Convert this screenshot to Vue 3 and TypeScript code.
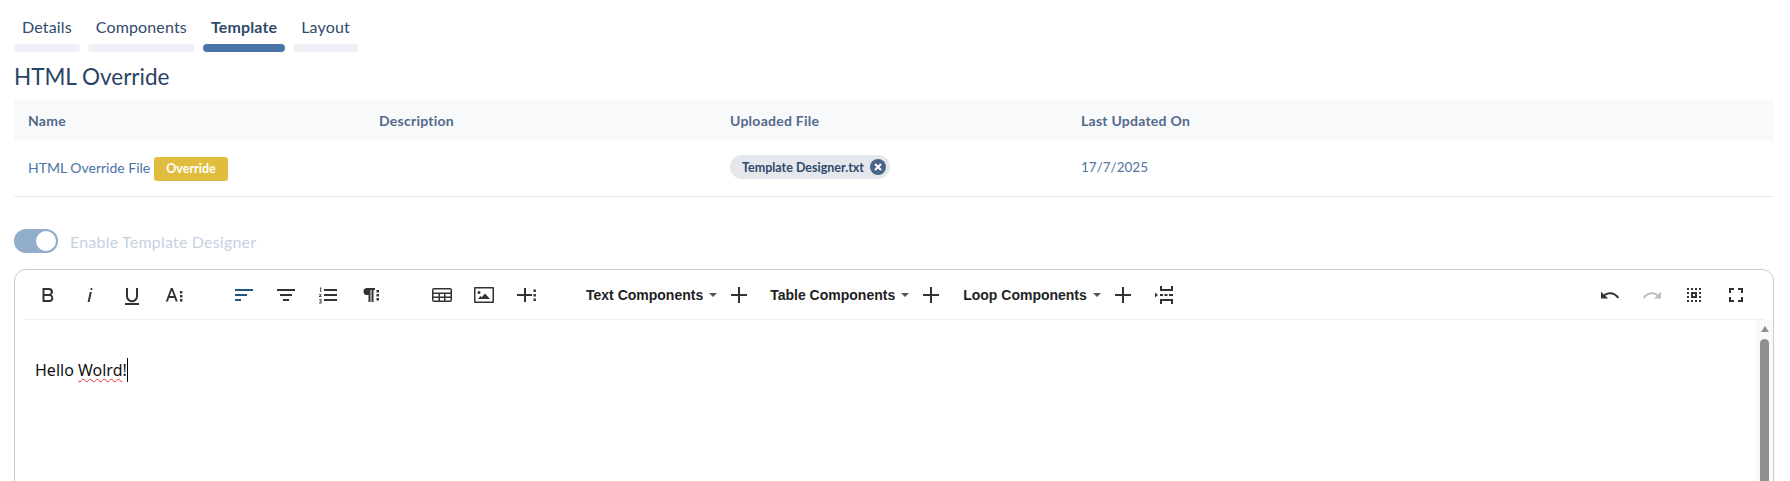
<script setup lang="ts">
interface Tool { id: string; d: string; muted?: boolean; active?: boolean }

const bold = 'M15.3 11.8c1-.7 1.7-1.8 1.7-2.9C17 6.700 15.300 5 13.100 5H6.500v14h7.100c2.100 0 3.700-1.700 3.700-3.800 0-1.500-.8-2.800-2-3.400zM8.500 7h4.300c1.100 0 2 .9 2 2s-.9 2-2 2H8.500V7zm5 10h-5v-4h5c1.100 0 2 .9 2 2s-.9 2-2 2z'
const italic = 'M11.800 9h2l-2.200 10h-2zM13.500 5a1.100 1.100 0 1 0 0 2.200 1.100 1.100 0 0 0 0-2.200z'
const underline = 'M19 20v2H5v-2zM16 13.200c0 2.300-1.800 4-4 4s-4-1.700-4-4V5H6v8.200c0 3.300 2.700 6 6 6s6-2.700 6-6V5h-2z'
const fontSize = 'M8.800 5h2l5 13.500h-2.100l-1.200-3.500H7.100l-1.200 3.500H3.800zM7.800 13h4L9.800 7.500zM18 8h2.400v2.400H18zM18 12h2.400v2.400H18zM18 16h2.400v2.400H18z'
const alignLeft = 'M3 6h18v2H3zM3 11h12v2H3zM3 16h6v2H3z'
const alignCenter = 'M3 6h18v2H3zM6 11h12v2H6zM9 16h6v2H9z'
const ol = 'M8 6h13v2H8zM8 11h13v2H8zM8 16h13v2H8zM4 4.500h1.200V9H4.300V5.500H4zM3 11.200h2.500v.9L4.200 13.300h1.300v.8H3v-.8l1.500-1.300H3zM3 16h2.500v4.500H3v-.8h1.600v-1H3.500v-.7h1.100v-1.200H3z'
const paragraph = 'M9 5h8v2h-1.500v12h-2V7h-1v12h-2v-7H9a3.500 3.500 0 0 1 0-7zM18.500 7H21v2.400h-2.500zM18.500 11H21v2.400h-2.500zM18.500 15H21v2.400h-2.500z'
const table = 'M20 5H4a2 2 0 0 0-2 2v10a2 2 0 0 0 2 2h16a2 2 0 0 0 2-2V7a2 2 0 0 0-2-2zM4 6.500h16a.5.5 0 0 1 .5.500v2.500h-17V7a.5.5 0 0 1 .5-.5zM3.500 11h5v2.500h-5zm6.500 0h4v2.500h-4zm5.500 0h5v2.500h-5zM3.500 17v-2h5v2.500H4a.5.5 0 0 1-.5-.5zm6.500-2h4v2.500h-4zm10 2.500h-4.500V15h5v2a.5.5 0 0 1-.5.5z'
const image = 'M3 4h18a1 1 0 0 1 1 1v14a1 1 0 0 1-1 1H3a1 1 0 0 1-1-1V5a1 1 0 0 1 1-1zm.5 1.500v13h17v-13zM7 8a1.500 1.500 0 1 1 0 3 1.500 1.500 0 0 1 0-3zM6 16l2.500-3 1.300 1.200L13 10.500l5 5.500z'
const plusDots = 'M10 5h2v6h6v2h-6v6h-2v-6H3v-2h7zM19.500 6.500h2.400v2.400h-2.400zM19.500 11h2.400v2.400h-2.400zM19.500 15.500h2.400v2.400h-2.400z'
const plus = 'M11 4h2v7h7v2h-7v7h-2v-7H4v-2h7z'
const pageBreak = 'M7 3h2v3h9V3h2v5H7zM7 21h2v-3h9v3h2v-5H7zM7 11h3v2H7zM11.500 11h3v2h-3zM16 11h4v2h-4zM2 9.500 5 12l-3 2.500z'
const undo = 'M10.400 9.400c-1.700.3-3.200.9-4.600 2L3 8.500v7h7l-2.700-2.700c3.700-2.600 8.800-1.800 11.500 1.900.2.300.4.500.5.800l1.800-.9C18.900 10.800 14.700 8.700 10.400 9.400z'
const redo = 'M13.600 9.400c1.700.3 3.200.9 4.600 2L21 8.500v7h-7l2.700-2.700C13 10.200 7.900 11 5.200 14.700c-.2.300-.4.500-.5.800l-1.800-.9C5.100 10.800 9.300 8.700 13.600 9.400z'
const selectAll = 'M5 5h2v2H5zM9 5h2v2H9zM13 5h2v2h-2zM17 5h2v2h-2zM5 9h2v2H5zM5 13h2v2H5zM5 17h2v2H5zM9 17h2v2H9zM13 17h2v2h-2zM17 17h2v2h-2zM17 9h2v2h-2zM17 13h2v2h-2zM9 9h6v6H9zm2 2v2h2v-2z'
const fullscreen = 'M5 5h5v2H7v3H5zM14 5h5v5h-2V7h-3zM5 14h2v3h3v2H5zM17 14h2v5h-5v-2h3z'

const tabs = [
  { label: 'Details', active: false },
  { label: 'Components', active: false },
  { label: 'Template', active: true },
  { label: 'Layout', active: false },
]

const groupOne: Tool[] = [
  { id: 'b', d: bold }, { id: 'i', d: italic }, { id: 'u', d: underline }, { id: 'fs', d: fontSize },
]
const groupTwo: Tool[] = [
  { id: 'al', d: alignLeft, active: true }, { id: 'ac', d: alignCenter }, { id: 'ol', d: ol }, { id: 'p', d: paragraph },
]
const groupThree: Tool[] = [
  { id: 't', d: table }, { id: 'img', d: image }, { id: 'pd', d: plusDots },
]
const dropdowns = ['Text Components', 'Table Components', 'Loop Components']
const groupRight: Tool[] = [
  { id: 'un', d: undo }, { id: 're', d: redo, muted: true }, { id: 'sa', d: selectAll }, { id: 'fu', d: fullscreen },
]
const groups = [groupOne, groupTwo, groupThree]
</script>

<template>
  <div class="page">
    <nav class="tabs">
      <div v-for="t in tabs" :key="t.label" class="tab" :class="{ on: t.active }">
        <span class="tab-label">{{ t.label }}</span>
        <span class="tab-bar"></span>
      </div>
    </nav>

    <h2 class="title">HTML Override</h2>

    <div class="table">
      <div class="row head">
        <div class="cell">Name</div>
        <div class="cell">Description</div>
        <div class="cell">Uploaded File</div>
        <div class="cell">Last Updated On</div>
      </div>
      <div class="row body">
        <div class="cell name"><span class="name-text">HTML Override File</span> <span class="badge">Override</span></div>
        <div class="cell"></div>
        <div class="cell raised">
          <span class="chip">
            <span class="chip-text">Template Designer.txt</span>
            <svg class="chip-x" viewBox="0 0 16 16" width="16" height="16">
              <circle cx="8" cy="8" r="8" fill="#4a6488" />
              <path d="M5 5l6 6M11 5l-6 6" stroke="#fff" stroke-width="2" fill="none" />
            </svg>
          </span>
        </div>
        <div class="cell date raised">17/7/2025</div>
      </div>
    </div>

    <div class="toggle-row">
      <span class="toggle"><span class="knob"></span></span>
      <span class="toggle-label">Enable Template Designer</span>
    </div>

    <section class="editor">
      <div class="toolbar">
        <div v-for="(g, gi) in groups" :key="gi" class="group">
          <span v-for="tool in g" :key="tool.id" class="tool" :class="{ muted: tool.muted, active: tool.active }">
            <svg viewBox="0 0 24 24" width="24" height="24"><path :d="tool.d" /></svg>
          </span>
        </div>
        <div class="drops">
          <div v-for="d in dropdowns" :key="d" class="drop">
            <span class="drop-label">{{ d }}</span>
            <span class="caret"></span>
            <span class="tool plus">
              <svg viewBox="0 0 24 24" width="24" height="24"><path :d="plus" /></svg>
            </span>
          </div>
          <span class="tool break">
            <svg viewBox="0 0 24 24" width="24" height="24"><path :d="pageBreak" /></svg>
          </span>
        </div>
        <div class="group right">
          <span v-for="tool in groupRight" :key="tool.id" class="tool" :class="{ muted: tool.muted }">
            <svg viewBox="0 0 24 24" width="24" height="24"><path :d="tool.d" /></svg>
          </span>
        </div>
      </div>
      <div class="content">
        <p class="text">Hello <span class="typo">Wolrd</span>!<span class="cursor"></span></p>
        <div class="scrollbar">
          <span class="arrow"></span>
          <span class="thumb"></span>
        </div>
      </div>
    </section>
  </div>
</template>

<style>
html, body { margin: 0; background: #fff; overflow: hidden; }
</style>

<style scoped>
.page {
  height: 481px;
  overflow: hidden;
  padding: 17px 16px 0 14px;
  box-sizing: border-box;
  font-family: Lato, "Open Sans", sans-serif;
  color: #2d4565;
}
.tabs { display: flex; gap: 8px; }
.tab { display: flex; flex-direction: column; }
.tab-label {
  padding: 0 8px;
  font-size: 16px;
  letter-spacing: 0.150px;
  line-height: 20px;
  color: #2f4a6b;
  text-align: center;
}
.tab.on .tab-label { font-weight: 700; }
.tab-bar {
  margin-top: 7px;
  height: 8px;
  border-radius: 4px;
  background: #edf1f6;
}
.tab.on .tab-bar { background: #4a74a5; }
.title {
  margin: 10px 0 0;
  font-size: 22.500px;
  line-height: 29px;
  font-weight: 400;
  color: #2b4464;
}
.table { margin-top: 9px; border-bottom: 1px solid #e8eaee; }
.row { display: grid; grid-template-columns: 351px 351px 351px 1fr; align-items: center; }
.head { height: 41px; background: #f8f9fb; }
.body { height: 55px; }
.cell { padding-left: 14px; font-size: 14px; }
.head .cell { font-weight: 700; color: #53698a; letter-spacing: 0.250px; margin-top: -1px; }
.name { color: #4a74a5; display: flex; align-items: center; gap: 4px; }
.name-text { margin-bottom: 3px; }
.badge {
  display: inline-block;
  padding: 0 12px;
  height: 24px;
  line-height: 24px;
  border-radius: 3px;
  background: #e1bd3e;
  color: #fff;
  font-size: 12.500px;
  font-weight: 700;
  margin-top: 1px;
}
.raised { margin-top: -3px; }
.chip {
  display: inline-flex;
  align-items: center;
  height: 24px;
  padding: 0 4px 0 12px;
  border-radius: 12px;
  background: #e4e7ec;
  gap: 6px;
}
.chip-text { font-size: 12.500px; font-weight: 700; color: #2f4a6b; }
.date { color: #53759f; font-size: 13.500px; }
.toggle-row { display: flex; align-items: center; gap: 12px; margin-top: 32px; }
.toggle {
  display: flex;
  align-items: center;
  justify-content: flex-end;
  width: 44px;
  height: 24px;
  padding-right: 2px;
  box-sizing: border-box;
  border-radius: 12px;
  background: #92adcb;
}
.knob { width: 20px; height: 20px; border-radius: 50%; background: #fff; }
.toggle-label { font-size: 16px; letter-spacing: 0.200px; color: #c6d2e2; }
.editor {
  margin-top: 16px;
  height: 300px;
  border: 1.500px solid #cccccc;
  border-radius: 12px;
  padding: 0 9px;
  box-sizing: border-box;
  background: #fff;
}
.toolbar {
  display: flex;
  align-items: center;
  height: 49px;
  padding: 0 7px 0 3px;
  border-bottom: 1px solid #efefef;
  color: #222;
}
.group { display: flex; }
.group + .group { margin-left: 28px; }
.group + .group + .group { margin-left: 30px; }
.group.right { margin-left: auto; }
.tool {
  display: flex;
  align-items: center;
  justify-content: center;
  width: 38px;
  height: 38px;
  margin: 0 2px;
  flex: none;
}
.tool svg { fill: #333; display: block; }
.tool.active svg { fill: #1f5580; }
.tool.muted svg { fill: #bdbdbd; }
.drops { display: flex; align-items: center; margin-left: 39px; }
.drop { display: flex; align-items: center; }
.drop + .drop { margin-left: 10px; }
.drop + .drop + .drop { margin-left: 11px; }
.drop-label {
  font-family: "Liberation Sans", Arial, sans-serif;
  font-size: 14px;
  font-weight: 700;
  color: #222;
  white-space: nowrap;
}
.caret {
  margin: 0 3px 0 6px;
  border-left: 4px solid transparent;
  border-right: 4px solid transparent;
  border-top: 4px solid #555;
}
.plus { margin: 0 2px 0 0; }
.break { margin-left: 2px; }
.content { position: relative; height: 240px; }
.text {
  margin: 0;
  padding-top: 38px;
  padding-left: 11px;
  font-family: "Noto Sans", sans-serif;
  font-size: 16px;
  line-height: 24px;
  color: #111;
}
.typo { text-decoration: underline wavy #e8333a; text-decoration-thickness: 1px; text-underline-offset: 2px; }
.cursor {
  display: inline-block;
  width: 1px;
  height: 24px;
  background: #000;
  vertical-align: -6px;
}
.scrollbar {
  position: absolute;
  top: 0;
  right: -9px;
  width: 17px;
  bottom: 0;
  background: #fafafa;
  display: flex;
  flex-direction: column;
  align-items: center;
}
.arrow {
  margin-top: 6px;
  border-left: 4.500px solid transparent;
  border-right: 4.500px solid transparent;
  border-bottom: 6px solid #8f8f8f;
}
.thumb {
  margin-top: 7px;
  width: 9px;
  flex: 1;
  border-radius: 4.500px 4.500px 0 0;
  background: #8f8f8f;
}
</style>
